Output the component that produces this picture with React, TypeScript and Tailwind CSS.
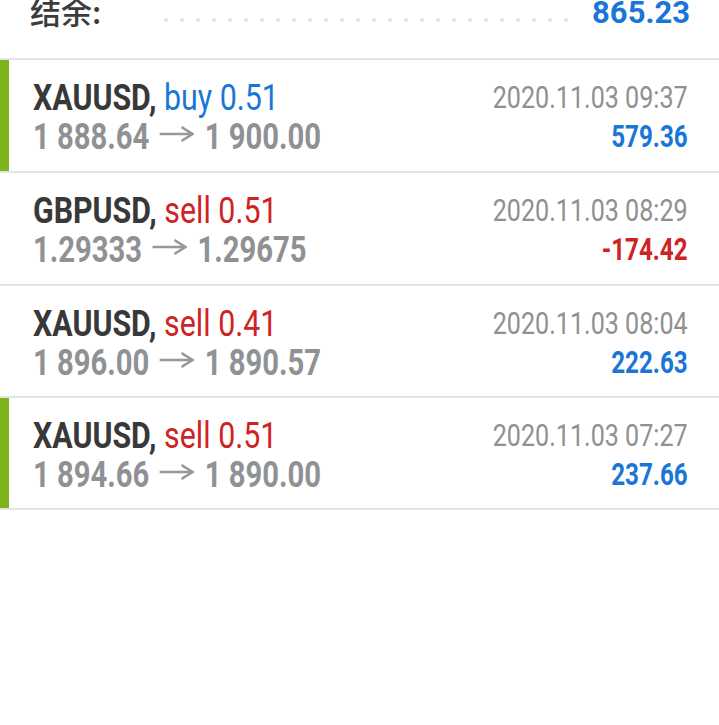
import React from "react";

type Trade = {
  sym: string;
  side: "buy" | "sell";
  vol: string;
  open: string;
  close: string;
  date: string;
  profit: string;
  bar: boolean;
  h: string;
};

const trades: Trade[] = [
  { sym: "XAUUSD", side: "buy", vol: "0.51", open: "1 888.64", close: "1 900.00", date: "2020.11.03 09:37", profit: "579.36", bar: true, h: "h-[113px]" },
  { sym: "GBPUSD", side: "sell", vol: "0.51", open: "1.29333", close: "1.29675", date: "2020.11.03 08:29", profit: "-174.42", bar: false, h: "h-[113px]" },
  { sym: "XAUUSD", side: "sell", vol: "0.41", open: "1 896.00", close: "1 890.57", date: "2020.11.03 08:04", profit: "222.63", bar: false, h: "h-[112px]" },
  { sym: "XAUUSD", side: "sell", vol: "0.51", open: "1 894.66", close: "1 890.00", date: "2020.11.03 07:27", profit: "237.66", bar: true, h: "h-[112px]" },
];

const font = { fontFamily: "Roboto, 'Noto Sans CJK SC', sans-serif" };

function Arrow() {
  return (
    <svg
      width="44"
      height="16"
      viewBox="0 0 44 16"
      className="inline-block align-[7px] mx-[13px]"
      fill="none"
      stroke="#96989b"
      strokeWidth="2.6"
      strokeLinecap="butt"
      strokeLinejoin="miter"
    >
      <path d="M0 8 H42" />
      <path d="M28 1 L42 8 L28 15" />
    </svg>
  );
}

function Row({ t }: { t: Trade }) {
  return (
    <div className={`flex ${t.h} border-b-2 border-[#e4e4e4]`}>
      <div className={`w-[9px] shrink-0 ${t.bar ? "bg-[#7db41c]" : "bg-transparent"}`} />
      <div className="flex flex-1 justify-between pl-[24px] pr-[31px] pt-[18px]">
        <div className="text-[37px] leading-[39px] whitespace-nowrap">
          <div className="origin-left scale-x-[0.82]">
            <span className="font-bold text-[#383838]">{t.sym},</span>{" "}
            <span className={t.side === "buy" ? "text-[#1a76d6]" : "text-[#cf2222]"}>
              {t.side} {t.vol}
            </span>
          </div>
          <div className="origin-left scale-x-[0.79] font-bold text-[#8f9194]">
            <span>{t.open}</span>
            <Arrow />
            <span>{t.close}</span>
          </div>
        </div>
        <div className="text-right whitespace-nowrap leading-[39px]">
          <div className="origin-right scale-x-[0.81] text-[31px] text-[#909090]">{t.date}</div>
          <div
            className={`origin-right scale-x-[0.78] text-[31px] font-bold ${
              t.profit.startsWith("-") ? "text-[#cf2222]" : "text-[#1a76d6]"
            }`}
          >
            {t.profit}
          </div>
        </div>
      </div>
    </div>
  );
}

export default function App() {
  const dots = Array.from({ length: 26 });
  return (
    <div className="w-[719px] h-[725px] bg-white overflow-hidden" style={font}>
      <div className="h-[60px] border-b-2 border-[#e4e4e4]">
        <div className="flex items-start h-full pl-[30px] pr-[29px]">
          <div
            className="-mt-[9px] text-[31px] leading-[40px] font-medium text-[#3c3c3c]"
            style={{ fontFamily: "'Noto Sans CJK SC', sans-serif" }}
          >
            结余:
          </div>
          <div className="flex gap-[12px] ml-[63px] mt-[18px]">
            {dots.map((_, i) => (
              <div key={i} className="w-[4px] h-[4px] rounded-full bg-[#e2e2e2]" />
            ))}
          </div>
          <div className="ml-auto -mt-[7px] leading-[39px] text-[31px] font-bold text-[#1a76d6]">
            865.23
          </div>
        </div>
      </div>
      {trades.map((t, i) => (
        <Row key={i} t={t} />
      ))}
    </div>
  );
}
